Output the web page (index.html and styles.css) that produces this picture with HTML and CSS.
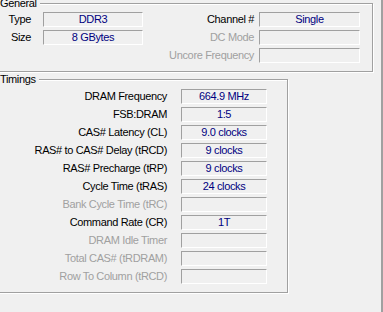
FILE: index.html
```html
<!DOCTYPE html>
<html lang="en">
<head>
    <meta charset="UTF-8">
    <title>Memory</title>
    <link rel="stylesheet" href="styles.css">
</head>
<body>
    <div class="panel">
        <!-- General -->
        <div class="group general">
            <div class="group-title">General</div>
            <div class="general-grid">
                <div class="label lbl-left">Type</div>
                <div class="value">DDR3</div>
                <div class="label lbl-right">Channel #</div>
                <div class="value">Single</div>

                <div class="label lbl-left">Size</div>
                <div class="value">8 GBytes</div>
                <div class="label lbl-right off">DC Mode</div>
                <div class="value"></div>

                <div></div>
                <div></div>
                <div class="label lbl-right off">Uncore Frequency</div>
                <div class="value"></div>
            </div>
        </div>

        <!-- Timings -->
        <div class="group timings">
            <div class="group-title">Timings</div>
            <div class="timings-grid">
                <div class="label">DRAM Frequency</div>
                <div class="value">664.9 MHz</div>
                <div class="label">FSB:DRAM</div>
                <div class="value">1:5</div>
                <div class="label">CAS# Latency (CL)</div>
                <div class="value">9.0 clocks</div>
                <div class="label">RAS# to CAS# Delay (tRCD)</div>
                <div class="value">9 clocks</div>
                <div class="label">RAS# Precharge (tRP)</div>
                <div class="value">9 clocks</div>
                <div class="label">Cycle Time (tRAS)</div>
                <div class="value">24 clocks</div>
                <div class="label off">Bank Cycle Time (tRC)</div>
                <div class="value"></div>
                <div class="label">Command Rate (CR)</div>
                <div class="value">1T</div>
                <div class="label off">DRAM Idle Timer</div>
                <div class="value"></div>
                <div class="label off">Total CAS# (tRDRAM)</div>
                <div class="value"></div>
                <div class="label off">Row To Column (tRCD)</div>
                <div class="value"></div>
            </div>
        </div>
    </div>
</body>
</html>
```

FILE: styles.css
```css
html, body { margin: 0; padding: 0; background: #f0f0f0; overflow: hidden; }
body { font-family: "Liberation Sans", Arial, sans-serif; font-size: 11px; letter-spacing: -0.35px; color: #000; }
.panel { height: 312px; box-sizing: border-box; border-right: 2px solid #a0a0a0; padding-top: 3px; }

/* etched group box */
.group { border: 1px solid #a0a0a0; box-shadow: inset 1px 1px 0 #fff, 1px 1px 0 #fff; margin-left: -3px; }
.group-title { width: fit-content; margin-top: -7px; padding: 0 3px 0 2px; line-height: 13px; background: #f0f0f0; }
.general { margin-right: 8px; padding-bottom: 8px; }
.timings { width: 289px; margin-top: 7px; padding-bottom: 8px; }

.label { line-height: 15px; text-align: right; white-space: nowrap; }
.off { color: #a0a0a0; }
.value { height: 15px; box-sizing: border-box; border: 1px solid; border-color: #a0a0a0 #fff #fff #a0a0a0; line-height: 13px; text-align: center; color: #000080; }

.general-grid { display: grid; grid-template-columns: 45px 100px 116px 101px; row-gap: 3px; margin-top: 2px; }
.general-grid .lbl-left { padding-right: 12px; }
.general-grid .lbl-right { padding-right: 5px; }

.timings-grid { display: grid; grid-template-columns: 183px 86px; row-gap: 3px; margin-top: 3px; }
.timings-grid .label { padding-right: 14px; }
```
